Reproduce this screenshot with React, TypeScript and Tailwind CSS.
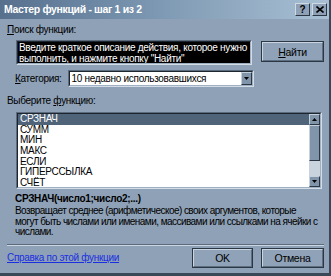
import React from "react";

const font = { fontFamily: '"Liberation Sans", Arial, sans-serif' };

const Btn = ({ children, className = "" }: { children: React.ReactNode; className?: string }) => (
  <div className={"border border-[#2b3744] " + className}>
    <div className="h-full border-t border-l border-[#c9d5e1] border-r border-b border-r-[#5d6e80] border-b-[#5d6e80] bg-[#8fa2b7] flex items-center justify-center text-[10.5px] text-black">
      {children}
    </div>
  </div>
);

const Sunken = ({ children, className = "" }: { children: React.ReactNode; className?: string }) => (
  <div className={"border-t border-l border-[#5b6b7c] border-r border-b border-r-[#d3dde7] border-b-[#d3dde7] " + className}>
    <div className="h-full border-t border-l border-[#1d2630] border-r border-b border-r-[#9fb0c2] border-b-[#9fb0c2] overflow-hidden">
      {children}
    </div>
  </div>
);

const ArrowBtn = ({ up = false }: { up?: boolean }) => (
  <div className="w-[11px] h-[11px] shrink-0 bg-[#8094aa] border-t border-l border-[#c4d0dc] border-r border-b border-r-[#2b3744] border-b-[#2b3744] flex items-center justify-center">
    <svg width="5" height="4" viewBox="0 0 5 4">
      {up ? <path d="M0 3h5L2.5 0z" fill="#000" /> : <path d="M0 0h5L2.5 3z" fill="#000" />}
    </svg>
  </div>
);

const items = ["СРЗНАЧ", "СУММ", "МИН", "МАКС", "ЕСЛИ", "ГИПЕРССЫЛКА", "СЧЁТ"];

export default function App() {
  return (
    <div style={font} className="w-[331px] h-[276px] bg-[#8ea1b6] border-r-[2px] border-b-[3px] border-[#3a4756] flex flex-col overflow-hidden whitespace-nowrap tracking-[-0.3px]">
      <div className="h-[19px] shrink-0 bg-gradient-to-r from-[#56708e] via-[#7f9ab4] to-[#a9c0d4] flex items-center justify-between pl-[4px] pr-[2px]">
        <span className="text-white font-bold text-[10.5px] tracking-[-0.35px]">Мастер функций - шаг 1 из 2</span>
        <div className="flex gap-[2px]">
          <div className="w-[15px] h-[13px] bg-[#8ea1b6] border-t border-l border-[#d0dae4] border-r border-b border-r-[#2b3744] border-b-[#2b3744] flex items-center justify-center text-[10px] font-bold leading-none">?</div>
          <div className="w-[15px] h-[13px] bg-[#8ea1b6] border-t border-l border-[#d0dae4] border-r border-b border-r-[#2b3744] border-b-[#2b3744] flex items-center justify-center">
            <svg width="8" height="7" viewBox="0 0 8 7"><path d="M0.5 0.5l7 6M7.5 0.5l-7 6" stroke="#000" strokeWidth="1.6" /></svg>
          </div>
        </div>
      </div>

      <div className="pl-[7px] pr-[5px] flex flex-col text-[10px] text-black leading-[12px]">
        <div className="mt-[5px] h-[12px]"><span className="underline">П</span>оиск функции:</div>

        <div className="flex mt-[4px] items-start">
          <Sunken className="ml-[9px] w-[236px] h-[25px]">
            <div className="h-full bg-black text-white text-[10px] leading-[11px] pl-[1px]">
              Введите краткое описание действия, которое нужно<br />выполнить, и нажмите кнопку "Найти"
            </div>
          </Sunken>
          <Btn className="ml-[9px] mt-[1px] w-[63px] h-[21px]"><span><span className="underline">Н</span>айти</span></Btn>
        </div>

        <div className="flex items-center mt-[5px] ml-[8px] h-[17px]">
          <span><span className="underline">К</span>атегория:</span>
          <Sunken className="ml-[6px] w-[186px] h-[17px]">
            <div className="h-full bg-white flex items-center justify-between pl-[2px]">
              <span>10 недавно использовавшихся</span>
              <div className="w-[11px] h-full bg-[#8094aa] border-t border-l border-[#c4d0dc] border-r border-b border-r-[#2b3744] border-b-[#2b3744] flex items-center justify-center">
                <svg width="5" height="3" viewBox="0 0 5 3"><path d="M0 0h5L2.5 3z" fill="#000" /></svg>
              </div>
            </div>
          </Sunken>
        </div>

        <div className="mt-[8px] h-[12px]">Выберите <span className="underline">ф</span>ункцию:</div>

        <Sunken className="ml-[9px] mt-[5px] w-[306px] h-[77px] shrink-0">
          <div className="h-full bg-white flex">
            <div className="flex-1 flex flex-col leading-[10.7px] text-[10px]">
              {items.map((t, i) => (
                <div key={t} className={"pl-[2px] h-[10.7px] " + (i === 0 ? "bg-[#4f6379] text-white" : "")}>{t}</div>
              ))}
            </div>
            <div className="w-[11px] flex flex-col bg-[#c9d3dd]">
              <ArrowBtn up />
              <div className="h-[36px] shrink-0 bg-[#8094aa] border-t border-l border-[#c4d0dc] border-r border-b border-r-[#2b3744] border-b-[#2b3744]" />
              <div className="flex-1" />
              <ArrowBtn />
            </div>
          </div>
        </Sunken>

        <div className="mt-[4px] ml-[8px] h-[12px] font-bold">СРЗНАЧ(число1;число2;...)</div>
        <div className="ml-[8px] mt-[1px] leading-[10.5px] text-[10px] tracking-[-0.55px]">
          Возвращает среднее (арифметическое) своих аргументов, которые<br />
          могут быть числами или именами, массивами или ссылками на ячейки с<br />
          числами.
        </div>

        <div className="mt-[6px] h-[2px] shrink-0 border-t border-[#5b6b7c] border-b border-b-[#c9d5e1]" />

        <div className="flex items-center mt-[2px]">
          <span className="text-[#1a2fe0] underline">Справка по этой функции</span>
          <div className="flex-1" />
          <Btn className="w-[61px] h-[20px]">OK</Btn>
          <Btn className="ml-[8px] w-[63px] h-[20px]">Отмена</Btn>
        </div>
      </div>
    </div>
  );
}
